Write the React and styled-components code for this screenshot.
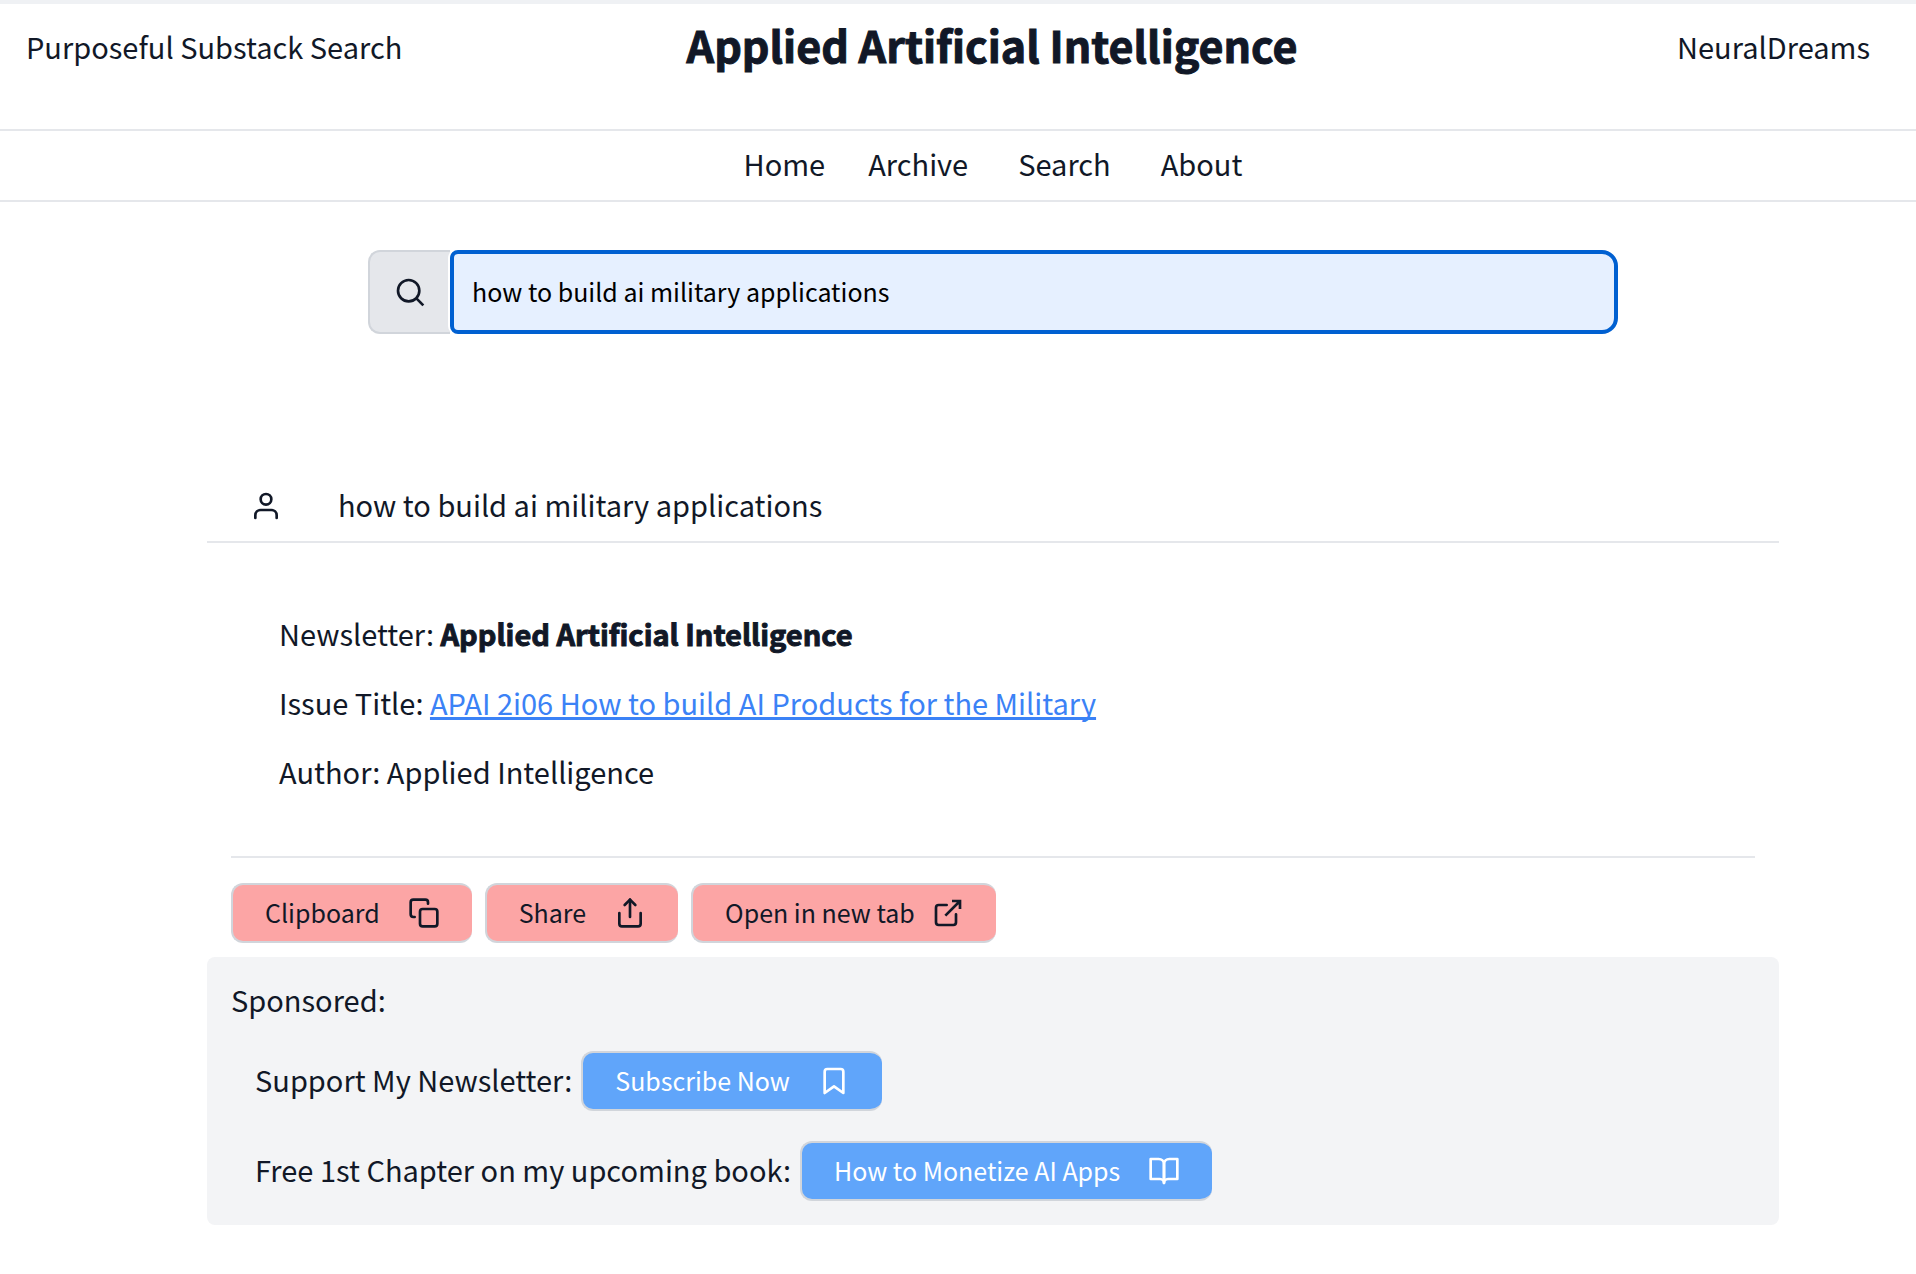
import React, { useState } from "react";
import styled, { createGlobalStyle } from "styled-components";
import { FiBookOpen, FiBookmark, FiCopy, FiShare, FiUser } from "react-icons/fi";

const GlobalStyle = createGlobalStyle`
  *, *::before, *::after { box-sizing: border-box; }
  body {
    margin: 0;
    background: #fff;
    color: #111827;
    font-family: "Noto Sans CJK SC", "Noto Sans", sans-serif;
    font-size: 29px;
    line-height: 48px;
  }
  svg { display: block; flex: none; }
`;

const Page = styled.div`
  border-top: 4px solid #eff1f4;
`;

const Header = styled.header`
  display: grid;
  grid-template-columns: 15fr auto 13fr;
  align-items: start;
  padding: 8px 46px 53px 26px;
  border-bottom: 2px solid #e5e7eb;
`;

const HeaderText = styled.span`
  padding-top: 10px;
  text-align: ${(p) => (p.$end ? "right" : "left")};
`;

const Title = styled.h1`
  margin: 0;
  font-size: 43px;
  line-height: 64px;
  font-weight: 700;
  -webkit-text-stroke: 1px currentColor;
`;

const Nav = styled.nav`
  display: flex;
  justify-content: center;
  padding: 8px 0 13px 70px;
  border-bottom: 2px solid #e5e7eb;
`;

const NavLink = styled.a`
  margin-left: ${(p) => (p.$near ? "43px" : "50px")};
  color: inherit;
  text-decoration: none;
  &:first-child { margin-left: 0; }
`;

const Main = styled.main`
  display: flex;
  flex-direction: column;
  align-items: center;
  padding: 48px 0 48px 70px;
`;

const SearchForm = styled.form`
  display: flex;
  width: 68%;
  max-width: 1250px;
  height: 84px;
  margin-bottom: 146px;
`;

const SearchAddon = styled.label`
  display: flex;
  align-items: center;
  justify-content: center;
  width: 82px;
  border: 2px solid #d1d5db;
  border-right: 0;
  border-radius: 12px 0 0 12px;
  background: #e5e7eb;
`;

const SearchInput = styled.input`
  flex: 1;
  min-width: 0;
  padding: 0 18px 3px;
  border: 4px solid #0060d1;
  border-radius: 8px 16px 16px 8px;
  outline: none;
  background: #e6f0ff;
  box-shadow: -2px 0 0 #fff;
  color: #000;
  font: inherit;
  font-size: 25px;
`;

const Result = styled.article`
  width: 86%;
  max-width: 1572px;
`;

const QueryRow = styled.div`
  display: flex;
  align-items: center;
  gap: 56px;
  padding: 0 43px 9px;
  border-bottom: 2px solid #e5e7eb;
`;

const RowText = styled.span`
  padding-bottom: 4px;
`;

const Details = styled.div`
  display: flex;
  flex-direction: column;
  gap: 21px;
  margin: 0 24px;
  padding: 66px 48px 61px;
  border-bottom: 2px solid #e5e7eb;
`;

const Detail = styled.p`
  margin: 0;
`;

const NewsletterName = styled.strong`
  font-weight: 700;
  -webkit-text-stroke: 1px currentColor;
`;

const IssueLink = styled.a`
  color: #3b82f6;
  text-decoration: underline;
  text-decoration-thickness: 3px;
  text-decoration-skip-ink: none;
  text-underline-offset: 2px;
`;

const Actions = styled.div`
  display: flex;
  gap: 13px;
  padding: 25px 24px 14px;
`;

const PillButton = styled.button`
  display: flex;
  align-items: center;
  gap: ${(p) => (p.$compact ? "17px" : "28px")};
  height: 60px;
  padding: 0 32px;
  border: 2px solid #d1d5db;
  border-right: 0;
  border-radius: 12px;
  background: ${(p) => (p.$blue ? "#60a5fa" : "#fca5a5")};
  color: ${(p) => (p.$blue ? "#fff" : "#111827")};
  font: inherit;
  font-size: 25px;
  cursor: pointer;
`;

const ButtonLabel = styled.span`
  padding-bottom: 2px;
`;

const Sponsored = styled.section`
  display: flex;
  flex-direction: column;
  padding: 18px 24px 24px;
  border-radius: 8px;
  background: #f3f4f6;
`;

const SponsoredTitle = styled.h2`
  margin: 0 0 28px;
  font: inherit;
`;

const Offers = styled.div`
  display: flex;
  flex-direction: column;
  gap: 30px;
  padding-left: 24px;
`;

const Offer = styled.div`
  display: flex;
  align-items: center;
  gap: 9px;
`;

function SearchIcon() {
  return (
    <svg width="32" height="32" viewBox="0 0 24 24" fill="none" stroke="#111827" strokeWidth="2">
      <circle cx="11" cy="11" r="8" />
      <path d="M16.6 16.6 22 22" />
    </svg>
  );
}

function OpenIcon() {
  return (
    <svg width="32" height="32" viewBox="0 0 24 24" fill="none" stroke="currentColor" strokeWidth="2">
      <path d="M18 13v6a2 2 0 0 1-2 2H5a2 2 0 0 1-2-2V8a2 2 0 0 1 2-2h6" strokeLinecap="round" />
      <path d="M15 3h6v6M10 14 21 3" />
    </svg>
  );
}

function ActionButton({ label, icon, ...rest }) {
  return (
    <PillButton type="button" {...rest}>
      <ButtonLabel>{label}</ButtonLabel>
      {icon}
    </PillButton>
  );
}

export default function App() {
  const [query, setQuery] = useState("how to build ai military applications");
  return (
    <Page>
      <GlobalStyle />
      <Header>
        <HeaderText>Purposeful Substack Search</HeaderText>
        <Title>Applied Artificial Intelligence</Title>
        <HeaderText $end>NeuralDreams</HeaderText>
      </Header>
      <Nav>
        <NavLink href="#home">Home</NavLink>
        <NavLink href="#archive" $near>Archive</NavLink>
        <NavLink href="#search">Search</NavLink>
        <NavLink href="#about">About</NavLink>
      </Nav>
      <Main>
        <SearchForm role="search" onSubmit={(e) => e.preventDefault()}>
          <SearchAddon htmlFor="query" aria-label="Search">
            <SearchIcon />
          </SearchAddon>
          <SearchInput
            id="query"
            type="text"
            spellCheck={false}
            value={query}
            onChange={(e) => setQuery(e.target.value)}
          />
        </SearchForm>
        <Result>
          <QueryRow>
            <FiUser size={32} />
            <RowText>how to build ai military applications</RowText>
          </QueryRow>
          <Details>
            <Detail>
              Newsletter: <NewsletterName>Applied Artificial Intelligence</NewsletterName>
            </Detail>
            <Detail>
              Issue Title: <IssueLink href="#issue">APAI 2i06 How to build AI Products for the Military</IssueLink>
            </Detail>
            <Detail>Author: Applied Intelligence</Detail>
          </Details>
          <Actions>
            <ActionButton label="Clipboard" icon={<FiCopy size={32} />} />
            <ActionButton label="Share" icon={<FiShare size={32} />} />
            <ActionButton label="Open in new tab" icon={<OpenIcon />} $compact />
          </Actions>
          <Sponsored>
            <SponsoredTitle>Sponsored:</SponsoredTitle>
            <Offers>
              <Offer>
                <RowText>Support My Newsletter:</RowText>
                <ActionButton label="Subscribe Now" icon={<FiBookmark size={32} />} $blue />
              </Offer>
              <Offer>
                <RowText>Free 1st Chapter on my upcoming book:</RowText>
                <ActionButton label="How to Monetize AI Apps" icon={<FiBookOpen size={32} />} $blue />
              </Offer>
            </Offers>
          </Sponsored>
        </Result>
      </Main>
    </Page>
  );
}
